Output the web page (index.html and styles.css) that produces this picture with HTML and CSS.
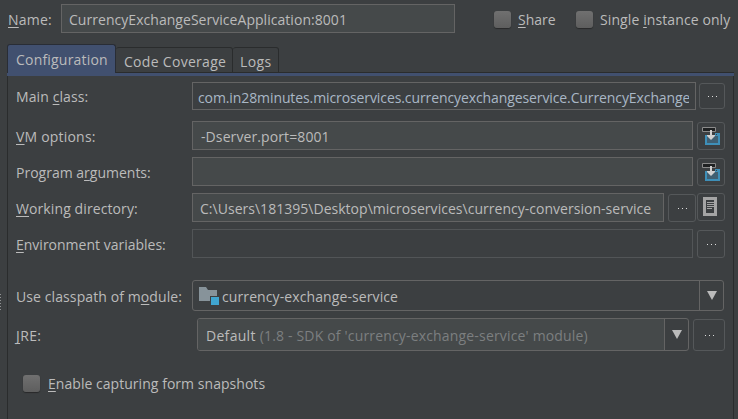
FILE: index.html
```html
<!DOCTYPE html>
<html lang="en">
<head>
<meta charset="utf-8">
<title>Run Configuration</title>
<link rel="stylesheet" href="styles.css">
</head>
<body>
<div class="window">
  <header class="header">
    <label class="name-label t2"><u>N</u>ame:</label>
    <div class="field name-field"><span class="t0">CurrencyExchangeServiceApplication:8001</span></div>
    <div class="check share"><span class="box"></span><span><u>S</u>hare</span></div>
    <div class="check"><span class="box"></span><span class="t1">Single <u>i</u>nstance only</span></div>
  </header>
  <nav class="tabs">
    <div class="tab active t2">Configuration</div>
    <div class="tab coverage t3">Code Coverage</div>
    <div class="tab logs t4">Logs</div>
    <div class="rest"></div>
  </nav>
  <main class="panel">
    <div class="row main-class">
      <label class="t1">Main <u>c</u>lass:</label>
      <div class="field clipped"><span class="tight">com.in28minutes.microservices.currencyexchangeservice.CurrencyExchange</span></div>
      <div class="button"><i class="dots"></i></div>
    </div>
    <div class="row vm">
      <label class="t2"><u>V</u>M options:</label>
      <div class="field vm-field"><span class="t1">-Dserver.port=8001</span></div>
      <div class="button"><svg width="18" height="18" viewBox="0 0 18 18"><path d="M3 6h15v12H3z" fill="#3e8fb8"/><path d="M5 9h11v7H5z" fill="#405f72"/><path d="M3 6h10v2H3zM14 7h1v1h-1z" fill="#3c3f41"/><path d="M.5.5h13v4H.5z" fill="#1f2122" stroke="#8b8b8b"/><path d="M8 3h2v5h3v1l-4 4-4-4V8h3z" fill="#d0d0d0"/></svg></div>
    </div>
    <div class="row args">
      <label>Program a<u>r</u>guments:</label>
      <div class="field"></div>
      <div class="button"><svg width="18" height="18" viewBox="0 0 18 18"><path d="M3 6h15v12H3z" fill="#3e8fb8"/><path d="M5 9h11v7H5z" fill="#405f72"/><path d="M3 6h10v2H3zM14 7h1v1h-1z" fill="#3c3f41"/><path d="M.5.5h13v4H.5z" fill="#1f2122" stroke="#8b8b8b"/><path d="M8 3h2v5h3v1l-4 4-4-4V8h3z" fill="#d0d0d0"/></svg></div>
    </div>
    <div class="row dir">
      <label class="t1"><u>W</u>orking directory:</label>
      <div class="field"><span class="path">C:\Users\181395\Desktop\microservices\currency-conversion-service</span></div>
      <div class="button browse"><i class="dots"></i></div>
      <div class="button macro"><svg width="14" height="19" viewBox="0 0 14 19"><path d="M1.5 1.5h11v16h-11z" fill="none" stroke="#a5a5a5" stroke-width="3"/><path d="M4 5.5h7M4 7.5h7M4 9.5h7M4 11.5h5" stroke="#a5a5a5"/></svg></div>
    </div>
    <div class="row env">
      <label><u>E</u>nvironment variables:</label>
      <div class="field disabled"></div>
      <div class="button"><i class="dots"></i></div>
    </div>
    <div class="row module">
      <label class="t1">Use classpath of m<u>o</u>dule:</label>
      <div class="combo">
        <div class="value"><svg width="20" height="18" viewBox="0 0 20 18"><path d="M0 0h7l2 3h9v11H0z" fill="#87939a"/><path d="M11 9h9v9h-9z" fill="#3c3f41"/><path d="M12 10h8v8h-8z" fill="#40a5d0"/></svg><span class="t1">currency-exchange-service</span></div>
        <div class="arrow"><svg width="10" height="9" viewBox="0 0 10 9"><path d="M0 0h10L5 9z" fill="#bbb"/></svg></div>
      </div>
    </div>
    <div class="row jre">
      <label class="t4"><u>J</u>RE:</label>
      <div class="combo editable">
        <div class="value"><span class="t3">Default</span><span class="hint">(1.8 - SDK of 'currency-exchange-service' module)</span></div>
        <div class="arrow"><svg width="10" height="9" viewBox="0 0 10 9"><path d="M0 0h10L5 9z" fill="#bbb"/></svg></div>
      </div>
      <div class="button"><i class="dots"></i></div>
    </div>
    <div class="check snapshots"><span class="box"></span><span class="t0"><u>E</u>nable capturing form snapshots</span></div>
  </main>
  <div class="grip"></div>
</div>
</body>
</html>
```
FILE: styles.css
```css
* { box-sizing: border-box; }
body {
  margin: 0;
  background: #3c3f41;
  color: #bbb;
  font: 14px/19px "Open Sans", "Noto Sans", sans-serif;
  overflow: hidden;
}
.window {
  position: relative;
  width: 738px;
  height: 419px;
  display: flex;
  flex-direction: column;
}
u { text-decoration: underline 1px; text-underline-offset: 2px; text-decoration-skip-ink: none; }
span, label { white-space: pre; }
svg { display: block; flex: none; }

.t0 { letter-spacing: .04px; }
.t1 { letter-spacing: .1px; }
.t2 { letter-spacing: .2px; }
.t3 { letter-spacing: .3px; }
.t4 { letter-spacing: .36px; }
.tight { letter-spacing: -.1px; }
.path { letter-spacing: .025px; }

.header { display: flex; align-items: center; height: 29px; margin-top: 4px; }
.name-label { width: 53px; margin-left: 8px; padding-top: 2px; }
.field {
  display: flex;
  align-items: center;
  height: 29px;
  padding: 2px 6px 0 7px;
  border: 1px solid #646464;
  background: #45494a;
}
.name-field { width: 394px; margin-right: 39px; }
.check { display: flex; align-items: center; gap: 7px; }
.header .check span:last-child { padding-top: 2px; }
.share { width: 82px; }
.box {
  width: 17px;
  height: 17px;
  border-radius: 3px;
  background: linear-gradient(#707070, #5e5e5e);
  box-shadow: 0 1px 1px #28292a;
}
.header .box { margin-top: 1px; }

.tabs { display: flex; align-items: flex-end; height: 32px; margin: 11px 4px 0 7px; border-bottom: 3px solid #41506f; }
.tab { height: 26px; border: 1px solid #2a2c2d; border-left: 0; border-radius: 3px 3px 0 0; padding: 4px 0 0 8px; line-height: 19px; }
.active { width: 109px; height: 29px; padding: 5px 0 0 8px; border: 1px solid #292d35; border-bottom: 0; background: #41506f; }
.coverage { width: 117px; }
.logs { width: 46px; padding-left: 7px; }
.rest { flex: 1; border-bottom: 1px solid #2a2c2d; }

.panel { flex: 1; width: 727px; margin-left: 7px; padding: 6px 8px 0; border: solid #2a2c2d; border-width: 0 1px; }
.row { display: flex; align-items: center; height: 29px; }
.row label { width: 176px; flex: none; padding-top: 2px; }
.row .field { width: 501px; }
.button {
  display: flex;
  align-items: center;
  justify-content: center;
  width: 28px;
  height: 28px;
  margin: 1px 0 0 4px;
  border: 1px solid #55585a;
  border-radius: 3px;
  flex: none;
}
.dots { width: 9px; height: 1px; background: repeating-linear-gradient(90deg, #ddd 0 1px, transparent 1px 4px); }
.main-class { height: 28px; margin-bottom: 11px; }
.main-class label { padding-top: 1px; }
.main-class .field { width: 504px; height: 28px; background: #3c3f41; padding: 2px 6px 0 5px; color: #a9b7c6; }
.clipped span { overflow: hidden; }
.main-class .button { width: 26px; height: 26px; margin: 0 0 0 3px; }
.row .vm-field { padding-left: 8px; }
.args, .dir, .env { margin-top: 7px; }
.dir .field { width: 472px; }
.dir .macro { margin: -1px 0 0 1px; padding: 0 2px 1px 0; }
.row .disabled { background: #3c3f41; border-color: #525557; }
.module { height: 31px; margin-top: 22px; }
.combo { display: flex; width: 532px; height: 31px; border: 1px solid #646464; border-radius: 3px; overflow: hidden; }
.value { flex: 1; display: flex; align-items: center; gap: 3px; padding: 1px 0 0 6px; }
.arrow { display: flex; align-items: center; justify-content: center; width: 24px; border-left: 1px solid #646464; }
.jre { height: 33px; margin-top: 7px; }
.editable { width: 492px; height: 33px; margin-left: 5px; }
.editable .value { background: #45494a; padding: 2px 0 0 8px; gap: 4px; }
.jre .button { width: 32px; height: 32px; }
.hint { color: #7c7f80; letter-spacing: .17px; }
.snapshots { height: 17px; margin: 24px 0 0 7px; gap: 8px; }

.grip {
  position: absolute;
  left: 0;
  top: 294px;
  width: 1px;
  height: 17px;
  background: repeating-linear-gradient(#909294 0 1px, transparent 1px 3px);
}
```
